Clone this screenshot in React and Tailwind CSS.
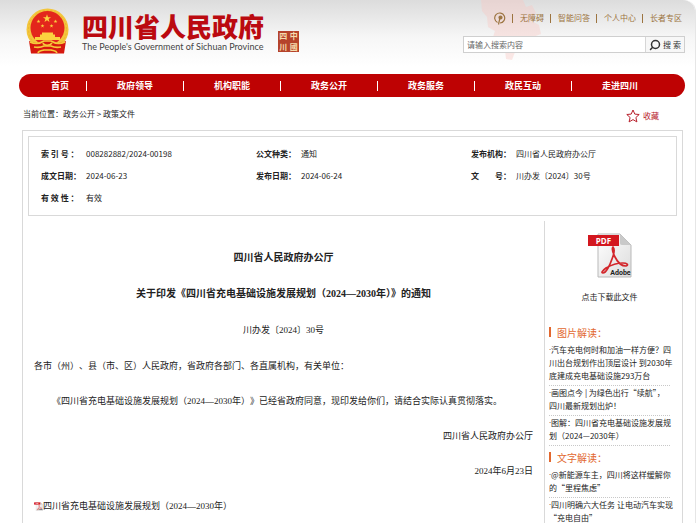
import { Search } from 'lucide-react';

const navItems = ['政府领导', '机构职能', '政务公开', '政务服务', '政民互动', '走进四川'];

const topLinks = ['无障碍', '智能问答', '个人中心', '长者专区'];

const docInfo = [
  [
    ['索 引 号 ：', '008282882/2024-00198'],
    ['公文种类：', '通知'],
    ['发布机构：', '四川省人民政府办公厅'],
  ],
  [
    ['成文日期：', '2024-06-23'],
    ['发布日期：', '2024-06-24'],
    ['文\u3000\u3000号：', '川办发〔2024〕30号'],
  ],
  [['有 效 性 ：', '有效']],
];

const pictureReadings = [
  ['汽车充电何时和加油一样方便？四', '川出台规划作出顶层设计 到2030年', '底建成充电基础设施293万台'],
  ['画图点今 | 为绿色出行“续航”，', '四川最新规划出炉！'],
  ['图解：四川省充电基础设施发展规', '划（2024—2030年）'],
];

const textReadings = [
  ['@新能源车主，四川将这样缓解你', '的“里程焦虑”'],
  ['四川明确六大任务 让电动汽车实现', '“充电自由”'],
];

const STAR = '0,-5 1.2,-1.6 4.8,-1.5 1.9,0.6 2.9,4 0,2 -2.9,4 -1.9,0.6 -4.8,-1.5 -1.2,-1.6';

const Emblem = () => (
  <svg viewBox="0 0 43 46" className="w-[43px] h-[46px] shrink-0" aria-hidden="true">
    <circle cx="21.5" cy="21.5" r="21" fill="#f3c63c" />
    <circle cx="21.5" cy="21.5" r="19" fill="none" stroke="#ecb52f" strokeWidth="1" strokeDasharray="2 2" />
    <circle cx="21.5" cy="20" r="17" fill="#e3261c" />
    <g fill="#fbd23f">
      <polygon points={STAR} transform="translate(21 10.5) scale(0.85)" />
      <polygon points={STAR} transform="translate(12.5 13.5) scale(0.4)" />
      <polygon points={STAR} transform="translate(16.5 18) scale(0.4)" />
      <polygon points={STAR} transform="translate(25.5 18) scale(0.4)" />
      <polygon points={STAR} transform="translate(29.5 13.5) scale(0.4)" />
      <path d="M16 24.5h11v2h2v2.5h5v3H9v-3h5v-2.5h2z" />
    </g>
    <path d="M3 33c6 3 11 2 14 0h9c3 2 8 3 14 0l-2 12.500H5z" fill="#d6180f" />
    <g fill="none" stroke="#f6c93a" strokeWidth="1.600">
      <path d="M4 34c6 3 11 1 14-1h7c3 2 8 4 14 1" />
      <path d="M17 35c1 3 7 3 9 0" />
      <path d="M8 39c5 1 8 0 10-1h7c2 1 5 2 10 1" />
      <path d="M12 45c1-3 4-2 6-3h7c2 1 5 0 6 3" />
    </g>
  </svg>
);

const PdfIcon = ({ className }) => (
  <svg viewBox="0 0 44 45" className={className} aria-hidden="true">
    <defs>
      <linearGradient id="sheet" x1="0" y1="0" x2="1" y2="1">
        <stop offset="0" stopColor="#ffffff" />
        <stop offset="1" stopColor="#dcdcdc" />
      </linearGradient>
    </defs>
    <path d="M10 1h22l11 11v32H10z" fill="url(#sheet)" stroke="#b9b9b9" />
    <path d="M32 1l11 11H34c-1.500 0-2-1-2-2z" fill="#c9c9c9" />
    <path
      d="M25 14c-2 2 0 6 2 10 3 6 7 9 11 9 3-1 1-3-3-3-6 0-12 2-17 5-4 3-5 5-3 5 3 0 7-8 9-14 2-5 3-10 1-12z"
      fill="none"
      stroke="#d3262b"
      strokeWidth="1.700"
    />
    <rect x="0" y="2" width="31" height="11" fill="#d3171f" />
    <text x="15.500" y="10.500" textAnchor="middle" fontSize="8" fontWeight="700" fill="#fff" fontFamily="Open Sans, sans-serif">PDF</text>
    <text x="32.500" y="42" textAnchor="middle" fontSize="7" fontWeight="700" fill="#222" fontFamily="Roboto, sans-serif">Adobe</text>
  </svg>
);

const Readings = ({ title, items }) => (
  <section>
    <h2 className="flex items-center gap-[6px] h-[22px] text-[10px] text-[#e2682f]">
      <span className="w-[2px] h-[10px] bg-[#e2682f]" />
      {title}
    </h2>
    <ul>
      {items.map((lines) => (
        <li key={lines[0]} className="pb-[3px] border-b border-dotted border-[#c8c8c8]">
          <a href="#" className="block leading-[13px] whitespace-nowrap before:float-left before:content-['·'] before:font-['Roboto']">
            {lines.map((line) => (
              <span key={line} className="block">{line}</span>
            ))}
          </a>
        </li>
      ))}
    </ul>
  </section>
);

const App = () => {
  return (
    <div className="h-screen overflow-hidden bg-white">
      <div className="mr-[1px] min-h-full border-r border-[#e6e6e6] rounded-tr-xl text-[8px] text-[#222] font-['Noto_Sans_CJK_SC',sans-serif]">
        {/* Header */}
        <header className="relative flex justify-between h-[74px] pl-[26px] pr-[10px] rounded-tr-xl bg-linear-to-b from-[#dcdcdc] via-[#f6f6f6] via-50% to-white to-90%">
          <svg viewBox="0 0 70 60" className="absolute top-0 right-[144px] w-[70px] h-[60px]" aria-hidden="true">
            <path d="M0 0h42l3 7 6-2 4 8-6 7 9 5 2 9-8 3 4 8-9 5-8-2-5 4-3 8-6-1-1-9-9-2-4-8 3-9-7-4-1-10-5-6z" fill="#f7c9c4" opacity="0.400" />
          </svg>

          <div className="flex pt-2">
            <Emblem />
            <div className="ml-[13px] pt-[2px]">
              <h1 className="text-[26px] leading-8 font-black text-[#bb0a10]">四川省人民政府</h1>
              <p className="text-[9px] leading-[10px] text-[#444] font-['Lato',sans-serif]">The People's Government of Sichuan Province</p>
            </div>
            <div className="grid grid-cols-2 w-[21px] h-[21px] ml-[14px] mt-[23px] bg-[#b5432b] text-[8px] leading-[10px] font-bold text-[#f5dcae] text-center">
              <span>四</span>
              <span>中</span>
              <span>川</span>
              <span>國</span>
            </div>
          </div>

          <div className="relative w-[222px] pt-[11px]">
            <div className="flex items-center justify-end h-[14px] pr-[3px] text-[#9c7440]">
              <svg viewBox="0 0 12 13" className="w-3 h-[13px]" fill="none" stroke="currentColor" strokeWidth="1.200" aria-hidden="true">
                <path d="M3.500 10.500A5 5 0 1 1 6 11" />
                <path d="M4.500 12.500L6 5.500" />
                <circle cx="6.500" cy="5.500" r="1.500" fill="currentColor" />
              </svg>
              {topLinks.map((link) => (
                <a key={link} href="#" className="flex items-center whitespace-nowrap">
                  <span className="w-[1px] h-[9px] ml-[6px] mr-[7px] bg-[#9c7440]" />
                  {link}
                </a>
              ))}
            </div>
            <form className="flex h-[17px] mt-[11px] border border-[#cfcfcf] bg-white">
              <input type="text" aria-label="搜索" placeholder="请输入搜索内容" className="flex-1 min-w-0 px-[3px] placeholder:text-[#666] outline-none" />
              <button type="button" className="flex items-center justify-center gap-[2px] w-[39px] border-l border-[#d6d6d6] bg-[#f7f7f7] text-[#333] whitespace-nowrap">
                <Search className="w-3 h-3 -scale-x-100" strokeWidth={3} />
                搜 索
              </button>
            </form>
          </div>
        </header>

        {/* Navigation */}
        <nav className="flex items-center h-[23px] ml-[19px] mr-[10px] pl-[15px] pr-[17px] rounded-full bg-[#be0203] text-[9px] font-bold text-white text-center">
          <a href="#" className="w-[52px]">首页</a>
          {navItems.map((item) => (
            <a key={item} href="#" className="flex-1 leading-[10px] border-l border-white">{item}</a>
          ))}
        </nav>

        {/* Breadcrumb */}
        <div className="flex justify-between h-[33px] pl-[23px] pr-9">
          <div className="pt-[10px] leading-[13px]">
            当前位置：<a href="#">政务公开</a> &gt; <a href="#">政策文件</a>
          </div>
          <button type="button" className="flex items-center gap-[3px] h-[37px] text-[#b8202c]">
            <svg viewBox="0 0 14 14" className="w-[14px] h-[14px]" fill="none" stroke="currentColor" aria-hidden="true">
              <path d="M7 1l1.800 4.100 4.400.4-3.300 3 1 4.400L7 10.600l-3.900 2.300 1-4.400-3.300-3 4.400-.4z" />
            </svg>
            收藏
          </button>
        </div>

        {/* Document */}
        <main className="ml-[22px] mr-3 border border-b-0 border-[#d9d9d9]">
          <div className="h-[80px] mt-[5px] mx-[5px] pl-3 pt-[6px] border border-[#d9d9d9]">
            <table className="w-full table-fixed text-left">
              <colgroup>
                <col className="w-[45px]" />
                <col className="w-[170px]" />
                <col className="w-[45px]" />
                <col className="w-[170px]" />
                <col className="w-[45px]" />
                <col />
              </colgroup>
              <tbody>
                {docInfo.map((row) => (
                  <tr key={row[0][0]} className="h-[22px] whitespace-nowrap">
                    {row.map(([label, value]) => [
                      <th key={label} scope="row" className="font-bold">{label}</th>,
                      <td key={value}>{value}</td>,
                    ])}
                  </tr>
                ))}
              </tbody>
            </table>
          </div>

          <div className="flex mt-[5px]">
            <article className="flex-1 min-w-0 px-[11px] pt-[19px] text-[9px] leading-[35px] font-['Liberation_Serif','Noto_Sans_CJK_SC',serif]">
              <div className="leading-9">
                <p className="text-center text-[10px] font-bold">四川省人民政府办公厅</p>
                <p className="text-center text-[10px] font-bold">关于印发《四川省充电基础设施发展规划（2024—2030年）》的通知</p>
                <p className="text-center">川办发〔2024〕30号</p>
                <p className="[text-spacing-trim:space-all]">各市（州）、县（市、区）人民政府，省政府各部门、各直属机构，有关单位：</p>
              </div>
              <p className="indent-[18px] [text-spacing-trim:space-all]">《四川省充电基础设施发展规划（2024—2030年）》已经省政府同意，现印发给你们，请结合实际认真贯彻落实。</p>
              <p className="text-right">四川省人民政府办公厅</p>
              <p className="text-right">2024年6月23日</p>
              <a href="#" className="flex items-center">
                <PdfIcon className="w-[9px] h-[9px]" />
                四川省充电基础设施发展规划（2024—2030年）
              </a>
            </article>

            <aside className="w-[138px] pl-1 pr-3 border-l border-[#d9d9d9]">
              <a href="#" className="flex flex-col items-center h-[100px] pt-3">
                <PdfIcon className="w-[44px] h-[45px]" />
                <span className="mt-3 leading-[14px]">点击下载此文件</span>
              </a>
              <Readings title="图片解读：" items={pictureReadings} />
              <Readings title="文字解读：" items={textReadings} />
            </aside>
          </div>
        </main>
      </div>
    </div>
  );
};

export default App;
